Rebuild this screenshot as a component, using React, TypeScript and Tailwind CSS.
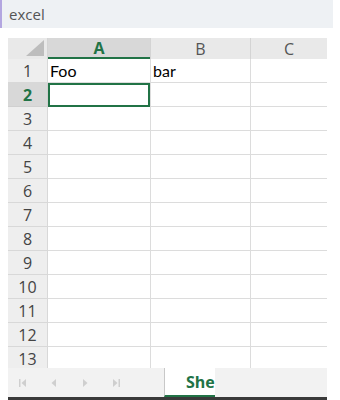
import React from "react";

const rows = Array.from({ length: 13 }, (_, i) => i + 1);

function NavIcon({ kind }: { kind: "first" | "prev" | "next" | "last" }) {
  return (
    <svg width="8" height="10" viewBox="0 0 8 10" fill="#cfcfcf">
      {kind === "first" && (
        <>
          <rect x="0" y="1" width="1.5" height="8" />
          <polygon points="7,1 2.5,5 7,9" />
        </>
      )}
      {kind === "prev" && <polygon points="6,1 1.5,5 6,9" />}
      {kind === "next" && <polygon points="2,1 6.5,5 2,9" />}
      {kind === "last" && (
        <>
          <polygon points="1,1 5.5,5 1,9" />
          <rect x="6.5" y="1" width="1.5" height="8" />
        </>
      )}
    </svg>
  );
}

export default function App() {
  return (
    <div className="w-[340px] h-[400px] bg-white overflow-hidden" style={{ fontFamily: '"Open Sans", sans-serif' }}>
      <div className="w-[333px] h-[28px] bg-[#eef1f4] border-l-2 border-[#b3a6e0] flex items-center pl-[7px] text-[15px] text-[#555]">
        excel
      </div>
      <div className="ml-[8px] mt-[10px] w-[319px] h-[362px] flex flex-col">
        <div className="h-[330px] overflow-hidden">
          <div className="flex h-[21px]">
            <div className="w-[40px] bg-[#e9e9e9] border-r border-[#d4d4d4] relative">
              <div className="absolute right-[3px] bottom-[3px] w-0 h-0 border-l-[18px] border-l-transparent border-b-[16px] border-b-[#bdbdbd]" />
            </div>
            <div className="w-[102px] bg-[#d8d8d8] border-b-2 border-[#217346] flex items-center justify-center text-[16px] font-bold text-[#217346]">
              A
            </div>
            <div className="w-[100px] bg-[#e9e9e9] border-l border-[#d4d4d4] flex items-center justify-center text-[16px] text-[#555]">
              B
            </div>
            <div className="w-[77px] bg-[#e9e9e9] border-l border-[#d4d4d4] flex items-center justify-center text-[16px] text-[#555]">
              C
            </div>
          </div>
          {rows.map((r) => (
            <div key={r} className="flex h-[24px]">
              <div
                className={`w-[40px] flex items-center justify-center text-[16px] border-r border-b ${
                  r === 2
                    ? "bg-[#d8d8d8] text-[#217346] font-bold border-[#d0d0d0]"
                    : "bg-[#eeeeee] text-[#444] border-[#d8d8d8]"
                }`}
              >
                {r}
              </div>
              <div
                className={`w-[102px] text-[16px] text-black flex items-center pl-[2px] ${
                  r === 2 ? "border-2 border-[#217346]" : "border-b border-[#dcdcdc]"
                }`}
                style={{ fontFamily: "Lato, sans-serif" }}
              >
                {r === 1 ? "Foo" : ""}
              </div>
              <div
                className="w-[100px] border-l border-b border-[#dcdcdc] text-[16px] text-black flex items-center pl-[2px]"
                style={{ fontFamily: "Lato, sans-serif" }}
              >
                {r === 1 ? "bar" : ""}
              </div>
              <div className="w-[77px] border-l border-b border-[#dcdcdc]" />
            </div>
          ))}
        </div>
        <div className="h-[29px] bg-[#f2f2f2] flex items-center">
          <div className="flex items-center w-[156px] pl-[11px] gap-[23px]">
            <NavIcon kind="first" />
            <NavIcon kind="prev" />
            <NavIcon kind="next" />
            <NavIcon kind="last" />
          </div>
          <div className="h-[29px] w-[51px] bg-white border-l border-[#c8c8c8] border-b-2 border-b-[#217346] flex items-center pl-[21px] text-[16px] font-bold text-[#217346] whitespace-nowrap">
            She
          </div>
        </div>
        <div className="h-[3px] bg-[#3a3a3a]" />
      </div>
    </div>
  );
}
